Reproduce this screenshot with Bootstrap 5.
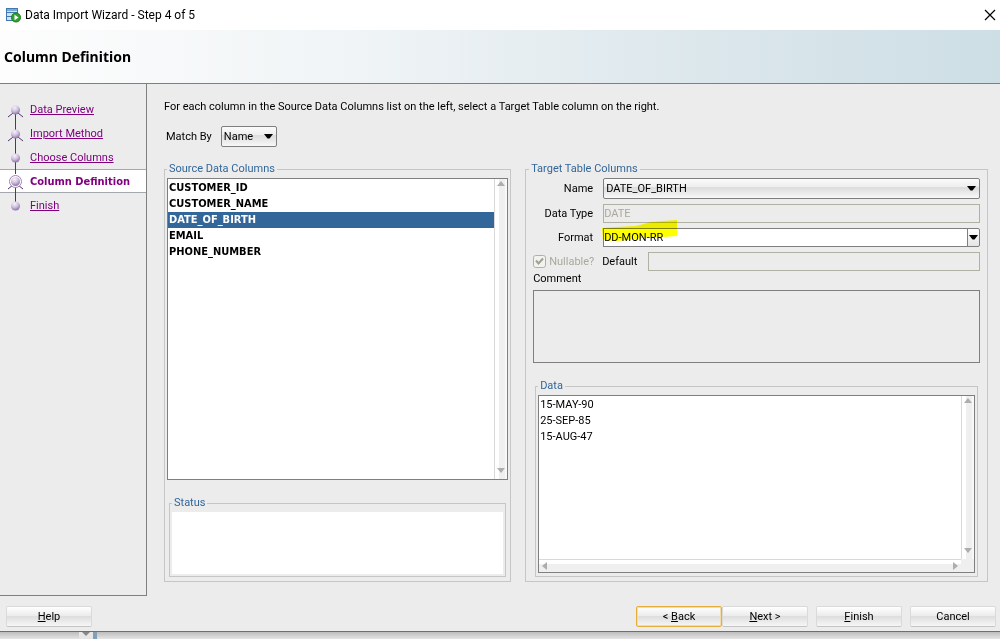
<!DOCTYPE html>
<html lang="en">
<head>
<meta charset="utf-8">
<meta name="viewport" content="width=device-width, initial-scale=1">
<title>Data Import Wizard</title>
<link rel="stylesheet" href="https://cdn.jsdelivr.net/npm/bootstrap@5.3.0/dist/css/bootstrap.min.css">
<style>
  :root { --ui: #ececec; --line: #7f7f7f; --soft: #c6c6c6; --legend: #336699; --visited: #800080; }
  body { font: 11px/14px Roboto, sans-serif; color: #000; background: var(--ui); }
  .titlebar { height: 30px; padding: 0 4px 0 6px; background: #fff; font: 12px/16px Roboto, sans-serif; }
  .close-x { border: 0; background: none; padding: 0; width: 12px; height: 12px; line-height: 0; }
  .banner { height: 54px; padding-left: 4px; border-bottom: 1px solid var(--line); background: linear-gradient(90deg, #fdfdfd, #f0f4f6 35%, #dce7ec 70%, #cddee5); }
  .banner h1 { font: bold 14px/18px "Noto Sans", sans-serif; margin: 0; }
  .steps { width: 147px; padding-top: 13px; border-right: 1px solid var(--line); border-bottom: 1px solid var(--line); }
  .steps li { height: 24px; border: 1px solid transparent; border-width: 1px 0; padding-left: 7px; gap: 6px; }
  .steps li.current { background: #fff; border-color: #a3a7ae; font-weight: bold; font-family: "DejaVu Sans Condensed", sans-serif; }
  .steps a, .steps li.current { color: var(--visited); }
  .steps a, .steps li.current span { padding-top: 2px; }
  .steps svg { overflow: visible; flex: none; }
  .content-pane { padding: 15px 12px 14px 17px; min-width: 0; }
  .content-pane p { padding-top: 1px; }
  .panes { display: grid; grid-template-columns: 3fr 4fr; gap: 14px; }
  .group { border: 1px solid var(--soft); min-width: 0; display: flex; flex-direction: column; }
  .group > legend { float: none; width: auto; margin: 0; padding: 0 2px; font-size: 11px; line-height: 14px; color: var(--legend); }
  .source { padding: 2px 2px 4px; }
  .target { padding: 2px 7px 4px; }
  .target > legend { margin-left: -4px; }
  .box { border: 1px solid var(--line); background: #fff; }
  .list-group { padding-top: 1px; }
  .list-group-item { padding: 0 1px; border: 0; height: 16px; line-height: 16px; color: #000; background: none; font-size: 11px; }
  .source .list-group-item { font-weight: bold; text-align: left; font-family: "DejaVu Sans Condensed", sans-serif; }
  .list-group-item + .list-group-item.active, .list-group-item.active { background: #336699; color: #fff; margin: 0; }
  .list-group, .list-group-item { border-radius: 0; }
  .vbar { width: 13px; border-left: 1px solid #d9d9d9; padding: 2px 0; background: linear-gradient(90deg, #fff 4px, #efefef 4px 10px, #f8f8f8 10px); }
  .hbar { height: 13px; border-top: 1px solid #d9d9d9; padding: 0 3px; background: linear-gradient(#fff 4px, #efefef 4px); }
  .corner { width: 13px; background: #efefef; }
  .form-select, .form-control { font-size: 11px; line-height: 14px; border-radius: 0; border-color: var(--line); color: #000; padding: 0; min-height: 0; height: 19px; }
  .form-select { height: 21px; border-radius: 2px; padding: 0 16px 0 2px;
    background: url("data:image/svg+xml,%3Csvg xmlns='http://www.w3.org/2000/svg' width='9' height='5'%3E%3Cpath d='M0 0h9L5.5 4.5h-2z'/%3E%3C/svg%3E") right 3px center / 9px 5px no-repeat, linear-gradient(#fbfbfb, #eeeeee 40%, #dcdcdc 45%, #f8f8f8); }
  .match-row { gap: 9px; padding-left: 2px; margin: 12px 0 15px; }
  .match-row label { min-width: 45px; }
  .match { width: 56px; }
  .form-control:disabled { background: var(--ui); border-color: #b1b1a3; color: #a9a99b; opacity: 1; }
  .fields { display: grid; grid-template-columns: 60px 1fr; column-gap: 10px; row-gap: 5px; align-items: center; }
  .fields > label { text-align: right; }
  .drop { width: 13px; margin-left: -1px; border: 1px solid var(--line); border-radius: 0 2px 2px 0; padding: 0; line-height: 0; background: linear-gradient(#fff, #e4e4e4); }
  .marker { left: -2px; top: -8px; mix-blend-mode: multiply; pointer-events: none; z-index: 6; }
  .check-row { margin: 5px 0 1px; }
  .nullable { width: 69px; gap: 3px; }
  .default-label { width: 46px; }
  .form-check-input { width: 13px; height: 13px; margin: 0; border-radius: 0; border: 1px solid #b1b1a3; }
  .form-check-input:checked:disabled { opacity: 1; border-color: #b1b1a3; background: #f2f2ee url("data:image/svg+xml,%3Csvg xmlns='http://www.w3.org/2000/svg' width='11' height='11'%3E%3Cpath d='M2 4.5l2.5 3L9 2.5' fill='none' stroke='%23a0a094' stroke-width='2'/%3E%3C/svg%3E") center / 11px 11px no-repeat; }
  .form-check-input:disabled ~ label { opacity: 1; color: #a9a99b; }
  textarea.form-control { height: 73px; min-height: 73px; background: var(--ui); resize: none; }
  .data-group { margin: 16px 2px 0; padding: 2px 2px 3px; }
  .status-group { margin: 16px 2px 0; padding: 2px; }
  .status-box { height: 62px; background: #fff; }
  .actions { padding: 10px 4px 3px 6px; height: 35px; }
  .actions .btn { width: 86px; height: 21px; padding: 0; font-size: 11px; line-height: 19px; border-radius: 2px; border: 1px solid #dadada; border-bottom-color: #c4c4c4; color: #000; background: linear-gradient(#fff, #ececec 45%, #dedede 50%, #f6f6f6); }
  .actions .btn.focused { border: 1px solid #e8ae3c; box-shadow: 0 0 0 1px #f5dba4 inset; }
  .desktop { height: 8px; border-top: 1px solid #6f6f6f; padding-left: 79px; background: linear-gradient(#bdbdbd, #e4e4e4); }
</style>
</head>
<body>
<div class="d-flex flex-column min-vh-100">
  <header>
    <div class="titlebar d-flex align-items-center">
      <svg width="15" height="15" viewBox="0 0 15 15" aria-hidden="true">
        <rect x=".5" y=".5" width="11" height="12" fill="#cfe3f5" stroke="#4178ad"/>
        <path d="M1 1h10v2H1z" fill="#79a9d8"/><path d="M1 4.5h10M1 8.5h10" stroke="#4178ad"/>
        <circle cx="10" cy="9.500" r="4.500" fill="#2fa32b" stroke="#187a1b"/><path d="M8.500 6.800v5.400l4-2.700z" fill="#fff"/>
      </svg>
      <span class="ms-1">Data Import Wizard - Step 4 of 5</span>
      <button class="close-x ms-auto" type="button" aria-label="Close"><svg width="12" height="12"><path d="M1 1l10 10M11 1L1 11" stroke="#000" stroke-width="1.200"/></svg></button>
    </div>
    <div class="banner d-flex align-items-center"><h1>Column Definition</h1></div>
  </header>

  <svg width="0" height="0" class="position-absolute" aria-hidden="true">
    <defs>
      <radialGradient id="ball" cx=".4" cy=".25" r=".8"><stop offset="0" stop-color="#f6f2fa"/><stop offset=".5" stop-color="#cfc0dc"/><stop offset="1" stop-color="#8468a0"/></radialGradient>
      <path id="fork" d="M8.500 12v12M8.500 14L1 20M8.500 14l7.500 6" fill="none" stroke="#50336f"/>
    </defs>
  </svg>

  <div class="d-flex flex-grow-1">
    <nav class="steps flex-shrink-0" aria-label="Wizard steps">
      <ol class="list-unstyled m-0">
        <li class="d-flex align-items-center"><svg width="17" height="24"><use href="#fork"/><circle cx="8.500" cy="13" r="4.500" fill="url(#ball)"/></svg><a href="#">Data Preview</a></li>
        <li class="d-flex align-items-center"><svg width="17" height="24"><path d="M8.500 0v12" stroke="#50336f"/><use href="#fork"/><circle cx="8.500" cy="13" r="4.500" fill="url(#ball)"/></svg><a href="#">Import Method</a></li>
        <li class="d-flex align-items-center"><svg width="17" height="24"><path d="M8.500 0v24" stroke="#50336f"/><circle cx="8.500" cy="13" r="4.500" fill="url(#ball)"/></svg><a href="#">Choose Columns</a></li>
        <li class="d-flex align-items-center current" aria-current="step"><svg width="17" height="24"><path d="M8.500 0v5" stroke="#50336f"/><use href="#fork"/><circle cx="8.500" cy="12.500" r="6" fill="#fff" stroke="#9c85b4"/><circle cx="8.500" cy="12.500" r="4.500" fill="url(#ball)"/></svg><span>Column Definition</span></li>
        <li class="d-flex align-items-center"><svg width="17" height="24"><path d="M8.500 0v12" stroke="#50336f"/><circle cx="8.500" cy="13" r="4.500" fill="url(#ball)"/></svg><a href="#">Finish</a></li>
      </ol>
    </nav>

    <main class="content-pane flex-grow-1 d-flex flex-column">
      <p class="mb-0">For each column in the Source Data Columns list on the left, select a Target Table column on the right.</p>
      <div class="match-row d-flex align-items-center">
        <label for="match">Match By</label>
        <select id="match" class="form-select match"><option>Name</option></select>
      </div>

      <div class="panes flex-grow-1">
        <fieldset class="group source">
          <legend>Source Data Columns</legend>
          <div class="box d-flex flex-grow-1">
            <div class="list-group flex-grow-1">
              <button type="button" class="list-group-item">CUSTOMER_ID</button>
              <button type="button" class="list-group-item">CUSTOMER_NAME</button>
              <button type="button" class="list-group-item active">DATE_OF_BIRTH</button>
              <button type="button" class="list-group-item">EMAIL</button>
              <button type="button" class="list-group-item">PHONE_NUMBER</button>
            </div>
            <div class="vbar d-flex flex-column justify-content-between align-items-center" aria-hidden="true">
              <svg width="8" height="5"><path d="M4 0l4 5H0z" fill="#adadad"/></svg>
              <svg width="8" height="5" class="mb-1"><path d="M4 5l4-5H0z" fill="#adadad"/></svg>
            </div>
          </div>
          <fieldset class="group status-group">
            <legend>Status</legend>
            <div class="status-box"></div>
          </fieldset>
        </fieldset>

        <fieldset class="group target">
          <legend>Target Table Columns</legend>
          <div class="fields">
            <label for="name">Name</label>
            <select id="name" class="form-select"><option>DATE_OF_BIRTH</option></select>
            <label for="type">Data Type</label>
            <input id="type" class="form-control" value="DATE" disabled>
            <label for="format">Format</label>
            <div class="d-flex position-relative">
              <input id="format" class="form-control" value="DD-MON-RR">
              <button type="button" class="drop flex-shrink-0" aria-label="Show formats"><svg width="9" height="5"><path d="M0 0h9L5.500 4.500h-2z"/></svg></button>
              <svg class="marker position-absolute" width="78" height="24" aria-hidden="true"><path d="M1 8l14-1 20-1 15-4 12-1 14-1v16l-14 1-20 1-15 2-12 1-13-1z" fill="#ffff00"/></svg>
            </div>
          </div>
          <div class="check-row d-flex align-items-center">
            <div class="nullable d-flex align-items-center flex-shrink-0">
              <input id="nullable" type="checkbox" class="form-check-input flex-shrink-0" checked disabled>
              <label for="nullable">Nullable?</label>
            </div>
            <label for="default" class="default-label flex-shrink-0">Default</label>
            <input id="default" class="form-control" disabled>
          </div>
          <label for="comment" class="mb-1">Comment</label>
          <textarea id="comment" class="form-control"></textarea>
          <fieldset class="group data-group flex-grow-1">
            <legend>Data</legend>
            <div class="box flex-grow-1 d-flex flex-column">
              <div class="d-flex flex-grow-1">
                <ul class="list-group flex-grow-1">
                  <li class="list-group-item">15-MAY-90</li>
                  <li class="list-group-item">25-SEP-85</li>
                  <li class="list-group-item">15-AUG-47</li>
                </ul>
                <div class="vbar d-flex flex-column justify-content-between align-items-center" aria-hidden="true">
                  <svg width="8" height="5"><path d="M4 0l4 5H0z" fill="#adadad"/></svg>
                  <svg width="8" height="5" class="mb-1"><path d="M4 5l4-5H0z" fill="#adadad"/></svg>
                </div>
              </div>
              <div class="d-flex" aria-hidden="true">
                <div class="hbar flex-grow-1 d-flex justify-content-between align-items-center">
                  <svg width="5" height="8"><path d="M0 4l5-4v8z" fill="#adadad"/></svg>
                  <svg width="5" height="8"><path d="M5 4L0 0v8z" fill="#adadad"/></svg>
                </div>
                <div class="corner"></div>
              </div>
            </div>
          </fieldset>
        </fieldset>
      </div>
    </main>
  </div>

  <footer>
    <div class="actions d-flex">
      <button type="button" class="btn"><u>H</u>elp</button>
      <button type="button" class="btn focused ms-auto">&lt; <u>B</u>ack</button>
      <button type="button" class="btn me-2"><u>N</u>ext &gt;</button>
      <button type="button" class="btn me-2"><u>F</u>inish</button>
      <button type="button" class="btn">Cancel</button>
    </div>
    <div class="desktop" aria-hidden="true"><svg width="19" height="7" class="d-block"><path d="M0 0h14v7H0z" fill="#e6e6e6"/><path d="M3 0h8L7 4z" fill="#888"/><path d="M14 0h4v7h-4z" fill="#7f9fbb"/></svg></div>
  </footer>
</div>
<script src="https://cdn.jsdelivr.net/npm/bootstrap@5.3.0/dist/js/bootstrap.bundle.min.js"></script>
</body>
</html>
